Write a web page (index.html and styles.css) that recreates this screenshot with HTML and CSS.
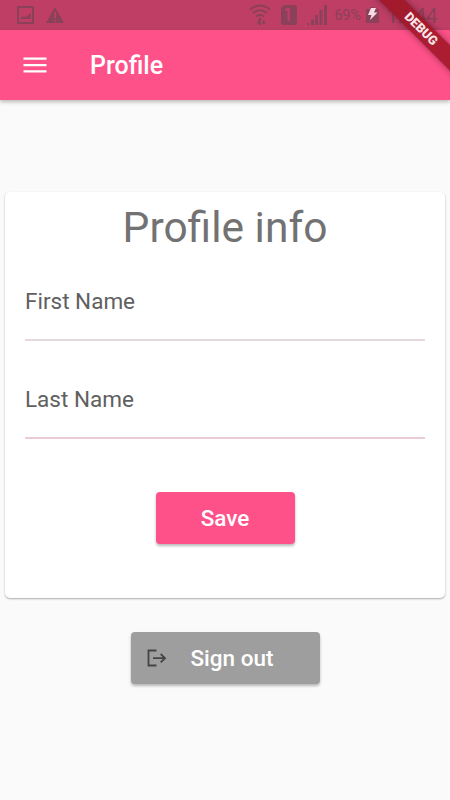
FILE: index.html
```html
<!DOCTYPE html>
<html lang="en">
<head>
<meta charset="utf-8">
<title>Profile</title>
<link rel="stylesheet" href="styles.css">
</head>
<body>
<div class="screen">
  <div class="status-bar">
    <svg class="status-left" width="50" height="20" viewBox="16 5 50 20" fill="currentColor">
      <path fill-rule="evenodd" d="M17 6h17v18H17zM19 8v14h13V8z"/>
      <path d="M20 19l3-3 3 1 5-4v6z"/>
      <path fill-rule="evenodd" d="M55 7l9 16H46zM54.300 12v6h1.700v-6zM54.300 19.500v2h1.700v-2z"/>
    </svg>
    <svg class="status-signal" width="80" height="22" viewBox="249 4 80 22" fill="currentColor">
      <g fill="none" stroke="currentColor" stroke-width="2">
        <path d="M250 9.500q10-8 20 0M253 13q7-5.500 14 0M256 16.500q4-3 8 0"/>
      </g>
      <path d="M260 17l2 3h-1.200v5h-1.600l-3-3h2v-2zM263 20h1.600v2h1.400l-2.200 3-2.200-3h1.400z"/>
      <path fill-rule="evenodd" d="M284 5h11q2 0 2 2v16q0 2-2 2h-12q-2 0-2-2V8zM285 9v2l2.500-.8V21h2.300V8h-1.600z"/>
      <path d="M307 23h2v2h-2zM311 19.500h3V25h-3zM315 15h3v10h-3zM319.500 10h3v15h-3zM324 5h3v20h-3z"/>
    </svg>
    <span class="battery-level">69%</span>
    <svg class="battery" width="13" height="16" viewBox="0 0 13 16">
      <path fill="currentColor" d="M0 2h4V0h5v2h4v14H0z"/>
      <path class="bolt" d="M5 1h5L8 5.500h3.500L4 13l1.500-5H2z"/>
    </svg>
    <span class="clock">12:44</span>
  </div>
  <header class="app-bar">
    <svg class="menu-icon" width="24" height="18" viewBox="0 0 24 18"><path d="M0.500 1.500h23v2.300h-23zM0.500 8h23v2.300h-23zM0.500 14.300h23v2.300h-23z"/></svg>
    <h1 class="app-title">Profile</h1>
  </header>
  <main class="content">
    <section class="card">
      <h2 class="card-title">Profile info</h2>
      <div class="field">First Name</div>
      <div class="field field-last">Last Name</div>
      <button class="button save">Save</button>
    </section>
    <button class="button sign-out">
      <svg class="exit-icon" width="20" height="18" viewBox="0 0 20 18"><path d="M9.500 1.500H1.500v15h8M6 9.200h11.500M13.700 5L18 9.200l-4.300 4.200"/></svg>
      <span>Sign out</span>
    </button>
  </main>
  <div class="debug-banner">DEBUG</div>
</div>
</body>
</html>
```
FILE: styles.css
```css
* {
  box-sizing: border-box;
}

body {
  margin: 0;
  font-family: Roboto, "Liberation Sans", sans-serif;
}

.screen {
  position: relative;
  width: 450px;
  height: 800px;
  overflow: hidden;
  background: #fafafa;
}

svg {
  display: block;
  flex: none;
}

.status-bar {
  display: flex;
  align-items: center;
  height: 30px;
  padding-left: 16px;
  background: #bf3e66;
  color: #8a4159;
}

.status-signal {
  margin-left: 182.5px;
}

.battery-level {
  width: 28px;
  margin: 1px 3px 0 6px;
  font-size: 14.5px;
  letter-spacing: -0.3px;
}

.bolt {
  fill: #f5dce5;
}

.clock {
  margin: 1px 0 0 8px;
  font-size: 20.5px;
  white-space: nowrap;
}

.app-bar {
  position: relative;
  display: flex;
  align-items: center;
  height: 70px;
  padding-left: 23px;
  background: #ff5189;
  color: #fff;
  box-shadow: 0 2px 4px rgba(0, 0, 0, 0.26);
}

.menu-icon {
  fill: #fff;
}

.app-title {
  margin: 2px 0 0 43px;
  font-size: 25px;
  line-height: 30px;
  font-weight: 500;
}

.content {
  display: flex;
  flex-direction: column;
  align-items: center;
  padding: 92px 5px 0;
}

.card {
  display: flex;
  flex-direction: column;
  width: 440px;
  height: 406px;
  padding: 11px 20px 0;
  border-radius: 5px;
  background: #fff;
  box-shadow: 0 1px 2px rgba(0, 0, 0, 0.32);
}

.card-title {
  margin: 0;
  font-size: 42.5px;
  line-height: 50px;
  font-weight: 400;
  text-align: center;
  color: #727272;
}

.field {
  height: 65px;
  margin-top: 23px;
  padding-top: 12px;
  border-bottom: 2px solid #e4d9dc;
  font-size: 22.5px;
  line-height: 27px;
  color: #606060;
}

.field-last {
  margin-top: 33px;
  border-bottom-color: #ebcbd5;
}

.button {
  display: flex;
  align-items: center;
  height: 52px;
  padding: 0;
  border: 0;
  border-radius: 4px;
  color: #fff;
  font: 500 22.5px/28px Roboto, "Liberation Sans", sans-serif;
  box-shadow: 0 2px 3px rgba(0, 0, 0, 0.28);
}

.save {
  align-self: center;
  justify-content: center;
  width: 139px;
  margin-top: 53px;
  background: #ff5189;
}

.sign-out {
  width: 189px;
  margin-top: 34px;
  padding-left: 16px;
  gap: 24px;
  background: #9e9e9e;
}

.exit-icon {
  fill: none;
  stroke: #444;
  stroke-width: 1.8;
}

.debug-banner {
  position: absolute;
  top: 20px;
  left: 341px;
  width: 160px;
  height: 18px;
  transform: rotate(45deg);
  background: rgba(160, 22, 38, 0.88);
  box-shadow: 0 0 7px rgba(0, 0, 0, 0.4);
  color: #f7e5e8;
  font-size: 12.7px;
  line-height: 18px;
  font-weight: 900;
  text-align: center;
}
```
